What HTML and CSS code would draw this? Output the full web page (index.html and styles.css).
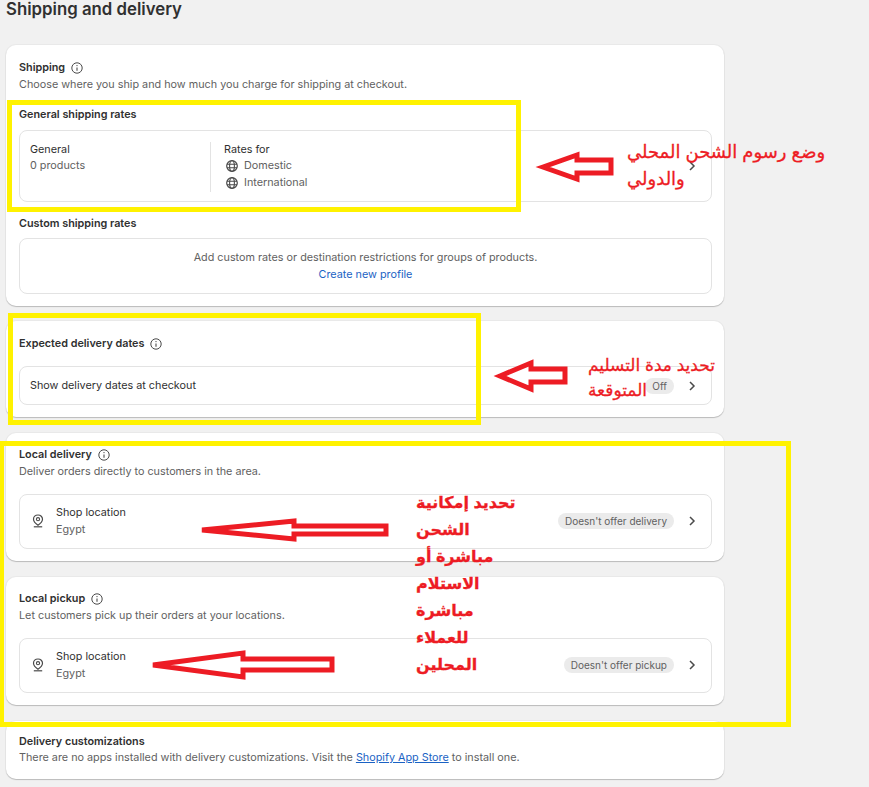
FILE: index.html

```html
<!DOCTYPE html>
<html>
<head>
	<meta charset="utf-8">
	<meta name="viewport" content="width=device-width, initial-scale=1">
	<title>Shipping and delivery</title>
<link rel="stylesheet" href="styles.css">
</head>
<body>
<svg width="0" height="0" class="defs">
    <symbol id="info" viewBox="0 0 12 12">
        <circle cx="6" cy="6" r="5.2" fill="none" stroke="#4a4a4a" stroke-width="1"/>
        <path d="M6 5.4V8.8" stroke="#4a4a4a" stroke-width="1.1" fill="none"/>
        <circle cx="6" cy="3.6" r=".7" fill="#4a4a4a"/>
    </symbol>
    <symbol id="globe" viewBox="0 0 12 12">
        <circle cx="6" cy="6" r="5.3" fill="none" stroke="#4a4a4a" stroke-width="1.2"/>
        <ellipse cx="6" cy="6" rx="2.4" ry="5.3" fill="none" stroke="#4a4a4a" stroke-width="1.1"/>
        <path d="M1 4.2H11M1 7.8H11" stroke="#4a4a4a" stroke-width="1.1" fill="none"/>
    </symbol>
    <symbol id="pin" viewBox="0 0 12 14">
        <path d="M6 1C3.3 1 1.5 3 1.5 5.3C1.5 7.6 3.6 9.6 6 11.2C8.4 9.6 10.5 7.6 10.5 5.3C10.5 3 8.7 1 6 1Z" fill="none" stroke="#4a4a4a" stroke-width="1.2"/>
        <circle cx="6" cy="5.2" r="1.6" fill="none" stroke="#4a4a4a" stroke-width="1.1"/>
        <path d="M1.8 12.8H10.2" stroke="#4a4a4a" stroke-width="1.2" fill="none"/>
    </symbol>
    <symbol id="chev" viewBox="0 0 8 10">
        <path d="M2 1L6 5L2 9" fill="none" stroke="#4a4a4a" stroke-width="1.5"/>
    </symbol>
</svg>

<div class="main">
    <h1 class="heads">Shipping and delivery</h1>

    <div class="cards">
        <div class="card first">
            <div class="tittle">Shipping <svg class="info"><use href="#info"/></svg></div>
            <div class="sub">Choose where you ship and how much you charge for shipping at checkout.</div>

            <div class="tittle general">General shipping rates</div>
            <div class="box rates">
                <div class="col1">
                    <div>General</div>
                    <div class="sub">0 products</div>
                </div>
                <div class="col2">
                    <div>Rates for</div>
                    <div class="sub zone"><svg class="globe"><use href="#globe"/></svg>Domestic</div>
                    <div class="sub zone"><svg class="globe"><use href="#globe"/></svg>International</div>
                </div>
                <svg class="chev"><use href="#chev"/></svg>
            </div>

            <div class="tittle custom">Custom shipping rates</div>
            <div class="box center">
                <div class="sub">Add custom rates or destination restrictions for groups of products.</div>
                <a href="#">Create new profile</a>
            </div>
        </div>

        <div class="card">
            <div class="tittle">Expected delivery dates <svg class="info"><use href="#info"/></svg></div>
            <div class="box row dates">
                <div class="grow">Show delivery dates at checkout</div>
                <span class="pill">Off</span>
                <svg class="chev"><use href="#chev"/></svg>
            </div>
        </div>

        <div class="card local">
            <div class="tittle">Local delivery <svg class="info"><use href="#info"/></svg></div>
            <div class="sub">Deliver orders directly to customers in the area.</div>
            <div class="box row shop">
                <svg class="pin"><use href="#pin"/></svg>
                <div class="grow">
                    <div>Shop location</div>
                    <div class="sub">Egypt</div>
                </div>
                <span class="pill">Doesn't offer delivery</span>
                <svg class="chev"><use href="#chev"/></svg>
            </div>
        </div>

        <div class="card local">
            <div class="tittle">Local pickup <svg class="info"><use href="#info"/></svg></div>
            <div class="sub">Let customers pick up their orders at your locations.</div>
            <div class="box row shop">
                <svg class="pin"><use href="#pin"/></svg>
                <div class="grow">
                    <div>Shop location</div>
                    <div class="sub">Egypt</div>
                </div>
                <span class="pill">Doesn't offer pickup</span>
                <svg class="chev"><use href="#chev"/></svg>
            </div>
        </div>

        <div class="card last">
            <div class="tittle">Delivery customizations</div>
            <div class="sub">There are no apps installed with delivery customizations. Visit the <a href="#" class="under">Shopify App Store</a> to install one.</div>
        </div>
    </div>

    <!-- annotations drawn on top of the screenshot -->
    <div class="mark mark1"></div>
    <div class="mark mark2"></div>
    <div class="mark mark3"></div>

    <svg class="arrows" width="869" height="787">
        <polygon points="543,167 577,155 577,160 611,160 611,173 577,173 577,179"/>
        <polygon points="500,376 531,363 531,369 565,369 565,382 531,382 531,389"/>
        <polygon points="202,530 294,521 294,526 386,526 386,534 294,534 294,539"/>
        <polygon points="153,665 243,653 243,659 332,659 332,670 243,670 243,677"/>
    </svg>

    <div class="note note1" dir="rtl">وضع رسوم الشحن المحلي<br>والدولي</div>
    <div class="note note2" dir="rtl">تحديد مدة التسليم<br>المتوقعة</div>
    <div class="note note3" dir="rtl">تحديد إمكانية<br>الشحن<br>مباشرة أو<br>الاستلام<br>مباشرة<br>للعملاء<br>المحلين</div>
</div>
</body>
</html>
```

FILE: styles.css

```css
*{
    box-sizing: border-box;
}
body{
    margin: 0;
    background: #f1f1f1;
    font-family: Inter, "Liberation Sans", sans-serif;
    font-size: 10.8px;
    line-height: 17px;
    color: #303030;
}
.defs{
    position: absolute;
}
.main{
    position: relative;
    height: 787px;
    overflow: hidden;
}
.heads{
    margin: 0 0 0 6px;
    height: 45px;
    font-size: 16.8px;
    line-height: 18px;
    font-weight: 600;
    color: #303030;
}
.cards{
    width: 718px;
    margin-left: 6px;
    display: flex;
    flex-direction: column;
    gap: 16px;
}
.card{
    background: #fff;
    border-radius: 10px;
    padding: 14px 12px 12px 13px;
    box-shadow: 0 1px 1px rgba(0, 0, 0, 0.2), 0 0 0 1px rgba(0, 0, 0, 0.03);
}
.first{
    margin-bottom: -1px;
    height: 261px;
}
.local{
    height: 128px;
    padding-top: 13px;
}
.last{
    height: 58px;
    padding-top: 12px;
    line-height: 16px;
}
.last .tittle{
    line-height: 17px;
}
.tittle{
    font-weight: 600;
    display: flex;
    align-items: center;
    gap: 6px;
}
.sub{
    color: #616161;
}
.box{
    border: 1px solid #e3e3e3;
    border-radius: 8px;
    padding: 10px;
}
.general{
    margin-top: 13px;
}
.custom{
    margin-top: 13px;
}
.general + .box{
    margin-top: 7px;
}
.custom + .box{
    margin-top: 6px;
}
.rates{
    display: flex;
    height: 72px;
    align-items: flex-start;
    line-height: 16.5px;
    padding-top: 10.5px;
}
.col1{
    width: 180px;
}
.col2{
    border-left: 1px solid #e3e3e3;
    padding-left: 13px;
    height: 50px;
}
.zone{
    display: flex;
    align-items: center;
    gap: 6px;
    padding-left: 2px;
}
.rates .chev{
    margin-left: auto;
    margin-top: 19px;
}
.center{
    text-align: center;
    height: 56px;
}
a{
    color: #1a62c4;
    text-decoration: none;
}
.under{
    text-decoration: underline;
}
.row{
    display: flex;
    align-items: center;
}
.grow{
    flex: 1;
}
.dates{
    height: 39px;
    margin-top: 14px;
}
.shop{
    height: 55px;
    margin-top: 14px;
    padding: 9px 10px 11px;
}
.pin{
    width: 12px;
    height: 14px;
    margin: 0 12px 0 2px;
}
.pill{
    background: #ebebeb;
    border-radius: 8px;
    padding: 0 7px;
    font-size: 10px;
    line-height: 16px;
    color: #616161;
}
.chev{
    width: 8px;
    height: 10px;
    margin-left: 14px;
    margin-right: 5px;
    flex: none;
}
.info{
    width: 12px;
    height: 12px;
}
.globe{
    width: 12px;
    height: 12px;
}
.mark{
    position: absolute;
    border: 5px solid #fff200;
}
.mark1{
    left: 7px;
    top: 100px;
    width: 514px;
    height: 112px;
}
.mark2{
    left: 8px;
    top: 313px;
    width: 473px;
    height: 112px;
}
.mark3{
    left: -1px;
    top: 441px;
    width: 792px;
    height: 286px;
}
.arrows{
    position: absolute;
    left: 0;
    top: 0;
}
.arrows polygon{
    fill: #fff;
    stroke: #ed1c24;
    stroke-width: 5;
}
.note{
    position: absolute;
    color: #ed1c24;
    white-space: nowrap;
    text-align: left;
    font-family: "Liberation Sans", "DejaVu Sans", sans-serif;
    font-size: 18px;
    -webkit-text-stroke: 0.3px #ed1c24;
}
.note1{
    left: 627px;
    top: 139px;
    line-height: 27px;
}
.note2{
    left: 588px;
    top: 353px;
    line-height: 25px;
    font-size: 17px;
}
.note3{
    left: 416px;
    top: 489px;
    line-height: 27px;
    font-size: 16px;
    font-weight: bold;
}
```
